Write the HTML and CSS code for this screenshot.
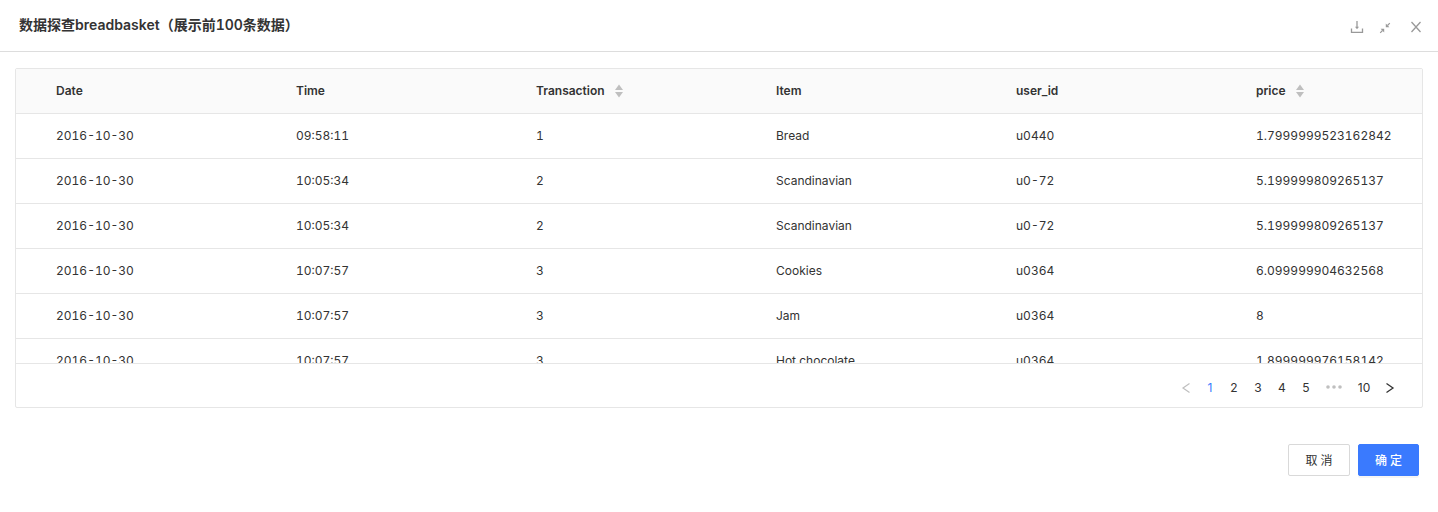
FILE: index.html
```html
<!DOCTYPE html>
<html lang="zh-CN">
<head>
  <meta charset="UTF-8">
  <meta name="viewport" content="width=device-width, initial-scale=1.0">
  <title>数据探查breadbasket</title>
  <link rel="stylesheet" href="styles.css">
</head>
<body>
  <header class="modal-header">
    <h1 class="modal-title">数据探查breadbasket（展示前100条数据）</h1>
    <div class="modal-tools">
      <button type="button" class="tool" aria-label="下载">
        <svg width="14" height="14" viewBox="0 0 14 14" fill="none" stroke="currentColor" stroke-width="1.3"><path d="M1.500 8.500v3.800h11V8.500"/><path d="M7 1v7"/><path d="M5 6.800h4L7 9.200z" fill="currentColor" stroke="none"/></svg>
      </button>
      <button type="button" class="tool" aria-label="退出全屏">
        <svg width="14" height="14" viewBox="0 0 14 14" fill="none" stroke="currentColor" stroke-width="1.2"><path d="M11.800 3.200L9.500 5.500M2.200 12.800l2.300-2.300"/><path d="M7.800 3.600v3.600h3.600zM6.200 12.400V8.800H2.600z" fill="currentColor" stroke="none"/></svg>
      </button>
      <button type="button" class="tool" aria-label="关闭">
        <svg width="14" height="14" viewBox="0 0 14 14" fill="none" stroke="currentColor" stroke-width="1.3"><path d="M2.500 2l9 10M11.500 2l-9 10"/></svg>
      </button>
    </div>
  </header>

  <main class="modal-body">
    <div class="table-card">
      <div class="table-scroll">
        <table class="data-table">
          <thead>
            <tr>
              <th>Date</th>
              <th>Time</th>
              <th>
                <button type="button" class="sorter">Transaction
                  <svg width="8" height="14" viewBox="0 0 8 14" fill="currentColor"><path d="M4 .5L8 6H0zM4 13.500L0 8h8z"/></svg>
                </button>
              </th>
              <th>Item</th>
              <th>user_id</th>
              <th>
                <button type="button" class="sorter">price
                  <svg width="8" height="14" viewBox="0 0 8 14" fill="currentColor"><path d="M4 .5L8 6H0zM4 13.500L0 8h8z"/></svg>
                </button>
              </th>
            </tr>
          </thead>
          <tbody>
            <tr><td>2016-10-30</td><td>09:58:11</td><td>1</td><td>Bread</td><td>u0440</td><td>1.7999999523162842</td></tr>
            <tr><td>2016-10-30</td><td>10:05:34</td><td>2</td><td>Scandinavian</td><td>u0-72</td><td>5.199999809265137</td></tr>
            <tr><td>2016-10-30</td><td>10:05:34</td><td>2</td><td>Scandinavian</td><td>u0-72</td><td>5.199999809265137</td></tr>
            <tr><td>2016-10-30</td><td>10:07:57</td><td>3</td><td>Cookies</td><td>u0364</td><td>6.099999904632568</td></tr>
            <tr><td>2016-10-30</td><td>10:07:57</td><td>3</td><td>Jam</td><td>u0364</td><td>8</td></tr>
            <tr><td>2016-10-30</td><td>10:07:57</td><td>3</td><td>Hot chocolate</td><td>u0364</td><td>1.899999976158142</td></tr>
          </tbody>
        </table>
      </div>
      <nav class="pagination" aria-label="分页">
        <button type="button" class="page" disabled aria-label="上一页">
          <svg width="10" height="12" viewBox="0 0 10 12" fill="none" stroke="currentColor" stroke-width="1.2"><path d="M8.500 1.500L2 6l6.500 4.500"/></svg>
        </button>
        <a class="page active" href="#1" aria-current="page">1</a>
        <a class="page" href="#2">2</a>
        <a class="page" href="#3">3</a>
        <a class="page" href="#4">4</a>
        <a class="page" href="#5">5</a>
        <button type="button" class="page jump" aria-label="向后 5 页">
          <svg width="18" height="12" viewBox="0 0 18 12" fill="currentColor"><circle cx="3" cy="5" r="1.800"/><circle cx="9" cy="5" r="1.800"/><circle cx="15" cy="5" r="1.800"/></svg>
        </button>
        <a class="page wide" href="#10">10</a>
        <button type="button" class="page" aria-label="下一页">
          <svg width="10" height="12" viewBox="0 0 10 12" fill="none" stroke="currentColor" stroke-width="1.300"><path d="M1.500 1.500L8 6l-6.500 4.500"/></svg>
        </button>
      </nav>
    </div>
  </main>

  <footer class="modal-footer">
    <button type="button" class="btn">取 消</button>
    <button type="button" class="btn btn-primary">确 定</button>
  </footer>
</body>
</html>
```
FILE: styles.css
```css
* {
  box-sizing: border-box;
}
body {
  margin: 0;
  background: #fff;
  color: #333;
  font-family: Inter, "Noto Sans CJK SC", sans-serif;
  font-size: 12px;
  line-height: 20px;
  font-variant-numeric: tabular-nums;
}
button {
  padding: 0;
  border: 0;
  background: none;
  color: inherit;
  font: inherit;
  font-variant-numeric: inherit;
  cursor: pointer;
}
svg {
  display: block;
}
.modal-header {
  display: flex;
  align-items: center;
  justify-content: space-between;
  height: 52px;
  padding: 0 15px 0 19px;
  border-bottom: 1px solid #ddd;
}
.modal-title {
  margin: 0;
  padding-bottom: 2px;
  font-size: 14px;
  font-weight: 600;
}
.modal-tools {
  display: flex;
  padding-top: 3px;
  gap: 14px;
  color: #999;
}
.tool:last-child {
  margin-left: 3px;
}
.modal-body {
  padding: 16px 15px 0;
}
.table-card {
  border: 1px solid #e6e6e6;
  border-radius: 2px;
}
.table-scroll {
  height: 294px;
  overflow: auto;
  scrollbar-width: none;
}
.data-table {
  width: 100%;
  min-width: 1440px;
  table-layout: fixed;
  border-collapse: separate;
  border-spacing: 0;
}
.data-table th,
.data-table td {
  height: 45px;
  padding: 0 0 0 40px;
  border-bottom: 1px solid #e6e6e6;
  text-align: left;
}
.data-table th {
  position: sticky;
  top: 0;
  background: #fafafa;
  font-weight: 600;
}
.sorter {
  display: flex;
  align-items: center;
  gap: 10px;
}
.sorter svg {
  color: #bfbfbf;
}
.pagination {
  display: flex;
  align-items: center;
  justify-content: flex-end;
  height: 44px;
  padding: 4px 20px 0 0;
  border-top: 1px solid #e6e6e6;
  font-variant-numeric: normal;
}
.page {
  display: flex;
  align-items: center;
  justify-content: center;
  width: 24px;
  height: 24px;
  color: #333;
  text-decoration: none;
}
.page:disabled {
  color: #bfbfbf;
  cursor: default;
}
.page.active {
  color: #3a7afe;
}
.page.jump {
  width: 32px;
  color: #bfbfbf;
}
.page.wide {
  width: 28px;
}
.modal-footer {
  display: flex;
  justify-content: flex-end;
  gap: 8px;
  padding: 36px 19px;
}
.btn {
  min-width: 62px;
  height: 32px;
  padding: 2px 15px 0;
  border: 1px solid #d9d9d9;
  border-radius: 2px;
  background: #fff;
}
.btn-primary {
  min-width: 61px;
  border-color: #3a7afe;
  background: #3a7afe;
  color: #fff;
  font-weight: 500;
  box-shadow: 0 2px 0 rgba(0, 0, 0, 0.04);
}
```
